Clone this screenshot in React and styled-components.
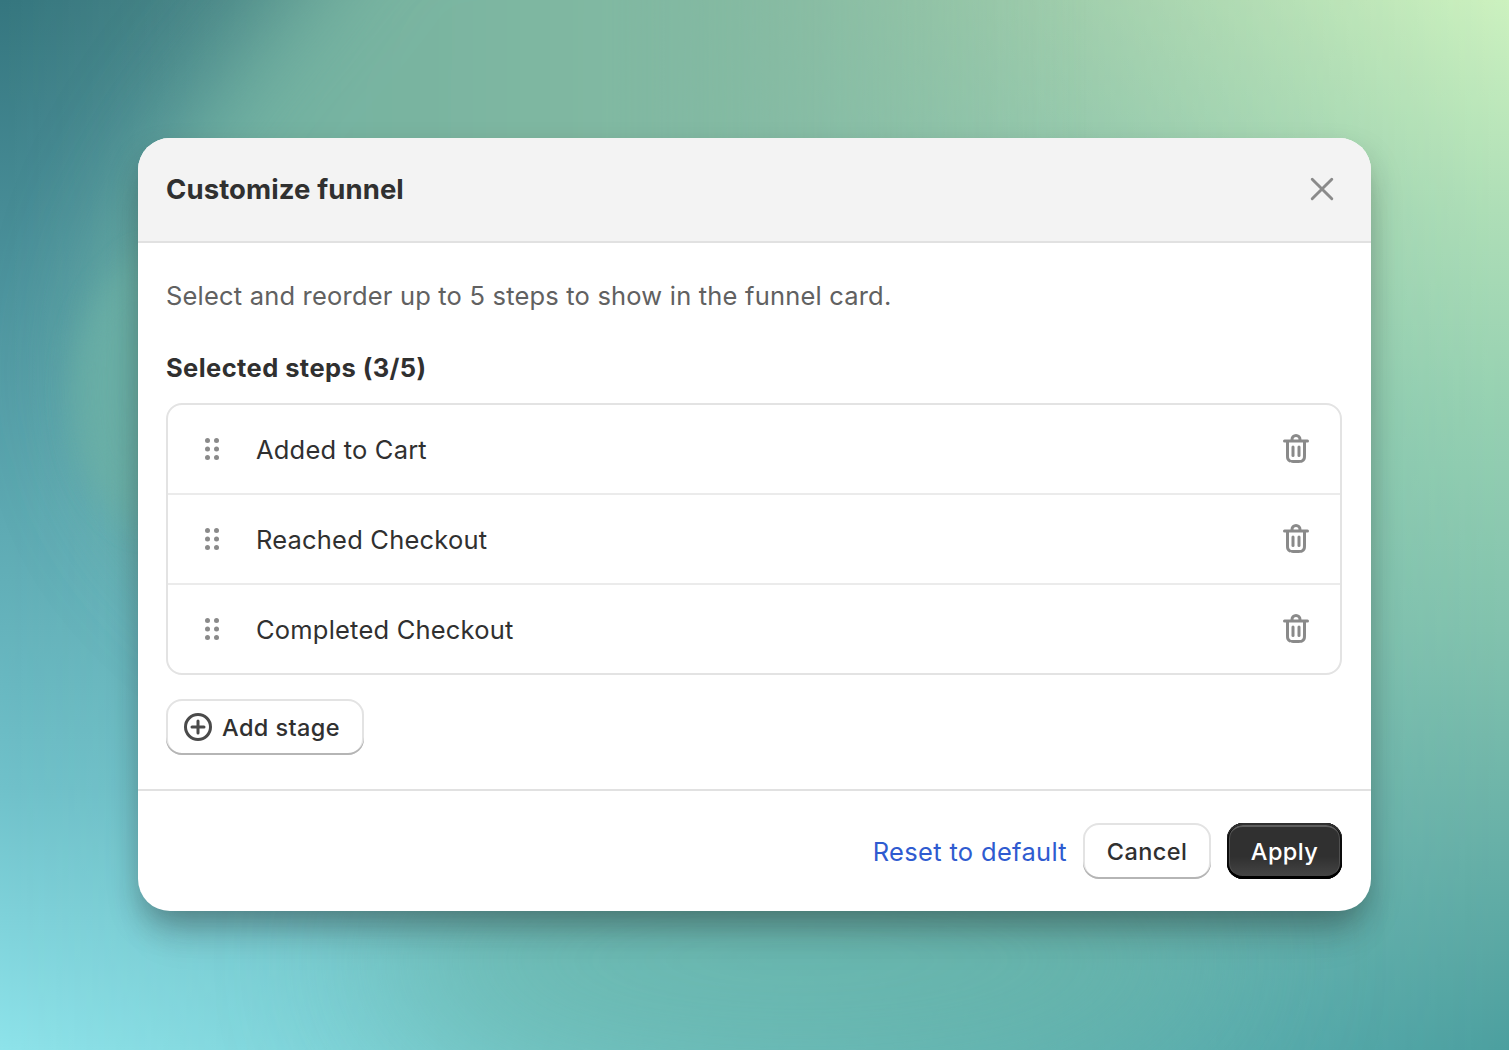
import React from "react";
import styled, { createGlobalStyle } from "styled-components";

const GlobalStyle = createGlobalStyle`
  * {
    box-sizing: border-box;
  }

  body {
    margin: 0;
    font-family: Inter, "Liberation Sans", sans-serif;
    font-optical-sizing: none;
    color: #303030;
  }
`;

const steps = ["Added to Cart", "Reached Checkout", "Completed Checkout"];

function CloseIcon() {
  return (
    <Icon viewBox="0 0 20 20">
      <path
        d="M5.1 5.1l9.8 9.8M14.9 5.1l-9.8 9.8"
        fill="none"
        stroke="currentColor"
        strokeWidth="1.45"
        strokeLinecap="round"
      />
    </Icon>
  );
}

function DragIcon() {
  return (
    <Icon viewBox="0 0 20 20">
      {[5.75, 10, 14.25].map((y) => (
        <React.Fragment key={y}>
          <circle cx="7.75" cy={y} r="1.25" />
          <circle cx="12.25" cy={y} r="1.25" />
        </React.Fragment>
      ))}
    </Icon>
  );
}

function TrashIcon() {
  return (
    <Icon viewBox="0 0 20 20">
      <path d="M11.5 8.25a.75.75 0 0 1 .75.75v4.25a.75.75 0 0 1-1.5 0v-4.25a.75.75 0 0 1 .75-.75Z" />
      <path d="M9.25 9a.75.75 0 0 0-1.5 0v4.25a.75.75 0 0 0 1.5 0v-4.25Z" />
      <path
        fillRule="evenodd"
        d="M7.25 5.25a2.75 2.75 0 0 1 5.5 0h3a.75.75 0 0 1 0 1.5h-.75v5.45c0 1.68 0 2.52-.327 3.162a3 3 0 0 1-1.311 1.311c-.642.327-1.482.327-3.162.327h-.4c-1.68 0-2.52 0-3.162-.327a3 3 0 0 1-1.311-1.311c-.327-.642-.327-1.482-.327-3.162v-5.45h-.75a.75.75 0 0 1 0-1.5h3Zm1.5 0a1.25 1.25 0 1 1 2.5 0h-2.5Zm-2.25 1.5h7v5.45c0 .865-.001 1.423-.036 1.848-.033.408-.09.559-.128.633a1.5 1.5 0 0 1-.655.655c-.074.038-.225.095-.633.128-.425.035-.983.036-1.848.036h-.4c-.865 0-1.423-.001-1.848-.036-.408-.033-.559-.09-.633-.128a1.5 1.5 0 0 1-.656-.655c-.037-.074-.094-.225-.127-.633-.035-.425-.036-.983-.036-1.848v-5.45Z"
      />
    </Icon>
  );
}

function PlusCircleIcon() {
  return (
    <Icon viewBox="0 0 20 20">
      <g fill="none" stroke="currentColor" strokeWidth="1.5" strokeLinecap="round">
        <circle cx="10" cy="10" r="6.25" />
        <path d="M10 7v6M7 10h6" />
      </g>
    </Icon>
  );
}

function Wallpaper() {
  return (
    <Backdrop viewBox="0 0 1509 1050" aria-hidden="true">
      <defs>
        <linearGradient id="left" x1="0" y1="0" x2="0" y2="1">
          <stop offset="0" stopColor="#35767f" />
          <stop offset="0.24" stopColor="#4a909a" />
          <stop offset="0.5" stopColor="#5eaab3" />
          <stop offset="0.75" stopColor="#70c1ca" />
          <stop offset="1" stopColor="#8ee3ea" />
        </linearGradient>
        <linearGradient id="right" x1="0" y1="0" x2="0" y2="1">
          <stop offset="0" stopColor="#cdf2bf" />
          <stop offset="0.2" stopColor="#afdfb7" />
          <stop offset="0.4" stopColor="#95d0b1" />
          <stop offset="0.6" stopColor="#82c2ad" />
          <stop offset="0.8" stopColor="#68b0a7" />
          <stop offset="1" stopColor="#4c9f9f" />
        </linearGradient>
        <linearGradient id="across">
          <stop offset="0" stopColor="#fff" stopOpacity="0" />
          <stop offset="1" stopColor="#fff" />
        </linearGradient>
        <mask id="fade">
          <rect width="1509" height="1050" fill="url(#across)" />
        </mask>
        <linearGradient id="green" x1="0" y1="0" x2="1" y2="0">
          <stop offset="0" stopColor="#6bb0a4" />
          <stop offset="0.3" stopColor="#79b4a0" />
          <stop offset="0.55" stopColor="#82b9a2" />
          <stop offset="1" stopColor="#9ccdab" />
        </linearGradient>
        <filter id="blur50" x="-30%" y="-30%" width="160%" height="160%">
          <feGaussianBlur stdDeviation="50" />
        </filter>
        <filter id="blur14" x="-60%" y="-30%" width="220%" height="160%">
          <feGaussianBlur stdDeviation="14" />
        </filter>
        <filter id="blur80" x="-40%" y="-100%" width="180%" height="300%">
          <feGaussianBlur stdDeviation="80" />
        </filter>
        <linearGradient id="blobFade">
          <stop offset="0.4" stopColor="#fff" />
          <stop offset="0.72" stopColor="#fff" stopOpacity="0" />
        </linearGradient>
        <mask id="blobMask">
          <rect width="1509" height="1050" fill="url(#blobFade)" />
        </mask>
      </defs>
      <rect width="1509" height="1050" fill="url(#left)" />
      <rect width="1509" height="1050" fill="url(#right)" mask="url(#fade)" />
      <ellipse
        cx="800"
        cy="960"
        rx="430"
        ry="150"
        fill="#68b2a4"
        filter="url(#blur80)"
        opacity="0.6"
      />
      <g mask="url(#blobMask)">
        <path
          d="M380-120C280 40 98 170 98 380 98 480 160 560 300 660L1100 700V-120Z"
          fill="url(#green)"
          filter="url(#blur50)"
        />
        <path
          d="M150 250C90 290 74 340 74 395 76 460 92 500 145 530Z"
          fill="#6cb0a6"
          filter="url(#blur14)"
          opacity="0.7"
        />
      </g>
    </Backdrop>
  );
}

function App() {
  return (
    <Page>
      <GlobalStyle />
      <Wallpaper />
      <Modal>
        <Header>
          <Title>Customize funnel</Title>
          <IconButton aria-label="Close">
            <CloseIcon />
          </IconButton>
        </Header>
        <Body>
          <Description>
            Select and reorder up to 5 steps to show in the funnel card.
          </Description>
          <Subtitle>Selected steps (3/5)</Subtitle>
          <List>
            {steps.map((step) => (
              <Row key={step}>
                <Handle>
                  <DragIcon />
                </Handle>
                <RowText>{step}</RowText>
                <IconButton aria-label="Remove">
                  <TrashIcon />
                </IconButton>
              </Row>
            ))}
          </List>
          <AddButton>
            <PlusCircleIcon />
            <span>Add stage</span>
          </AddButton>
        </Body>
        <Footer>
          <ResetButton>Reset to default</ResetButton>
          <Button $width={128}>
            <span>Cancel</span>
          </Button>
          <ApplyButton $width={115}>
            <span>Apply</span>
          </ApplyButton>
        </Footer>
      </Modal>
    </Page>
  );
}

const Page = styled.div`
  width: 1509px;
  height: 1050px;
  display: grid;
  overflow: hidden;

  > * {
    grid-area: 1 / 1;
  }
`;

const Backdrop = styled.svg`
  width: 1509px;
  height: 1050px;
  display: block;
`;

const Modal = styled.div`
  width: 1233px;
  height: 773px;
  margin: 138px;
  z-index: 1;
  display: flex;
  flex-direction: column;
  overflow: hidden;
  background: #fff;
  border-radius: 32px;
  box-shadow: 0 16px 32px -4px rgba(26, 26, 26, 0.36),
    0 40px 40px -16px rgba(26, 26, 26, 0.1);
`;

const Header = styled.div`
  height: 105px;
  flex-shrink: 0;
  padding: 0 29px 2px 28px;
  display: flex;
  justify-content: space-between;
  align-items: center;
  background: #f3f3f3;
  border-bottom: 2px solid #e1e1e1;
`;

const Title = styled.h2`
  margin: 0;
  padding-top: 1px;
  font-size: 27.5px;
  line-height: 40px;
  font-weight: 650;
  letter-spacing: 0.1px;
`;

const Icon = styled.svg`
  width: 40px;
  height: 40px;
  flex-shrink: 0;
  display: block;
  fill: currentColor;
`;

const IconButton = styled.button`
  padding: 0;
  border: none;
  background: none;
  color: #8a8a8a;
  cursor: pointer;
`;

const Body = styled.div`
  flex: 1;
  padding: 33px 29px 0 28px;
`;

const Description = styled.p`
  margin: 0 0 32px;
  font-size: 25.5px;
  line-height: 40px;
  letter-spacing: 0.19px;
  color: #616161;
`;

const Subtitle = styled.h3`
  margin: 0 0 15px;
  font-size: 25.5px;
  line-height: 40px;
  font-weight: 650;
  letter-spacing: 0.42px;
`;

const List = styled.div`
  border: 2px solid #e3e3e3;
  border-radius: 16px;
`;

const Row = styled.div`
  height: 90px;
  padding: 0 24px;
  display: flex;
  align-items: center;
  border-bottom: 2px solid #ebebeb;

  &:last-child {
    height: 88px;
    border-bottom: none;
  }
`;

const Handle = styled.span`
  color: #8a8a8a;
  cursor: grab;
`;

const RowText = styled.span`
  flex: 1;
  margin-left: 24px;
  padding-top: 2px;
  font-size: 25.5px;
  line-height: 40px;
  letter-spacing: 0.2px;
`;

const Button = styled.button`
  width: ${(props) => props.$width}px;
  height: 56px;
  padding: 0;
  display: flex;
  justify-content: center;
  align-items: center;
  border: none;
  border-radius: 16px;
  background: #fff;
  color: #303030;
  font-family: inherit;
  font-size: 23.5px;
  line-height: 40px;
  font-weight: 550;
  letter-spacing: 0.4px;
  cursor: pointer;
  box-shadow: inset 0 -2px 0 #b5b5b5, inset 0 0 0 2px #e3e3e3;

  span {
    padding-top: 1px;
  }
`;

const AddButton = styled(Button).attrs({ $width: 198 })`
  margin-top: 24px;
  padding-left: 12px;
  justify-content: flex-start;
  gap: 4px;

  svg {
    color: #4a4a4a;
  }
`;

const ApplyButton = styled(Button)`
  background: linear-gradient(180deg, #303030 60%, #474747 100%);
  color: #fff;
  box-shadow: inset 0 2px 0 #303030, inset 0 -3px 0 #000, inset 0 0 0 2px #0c0c0c,
    inset 0 4px 0 #5e5e5e, inset 0 0 0 3px #505050;
`;

const Footer = styled.div`
  height: 122px;
  flex-shrink: 0;
  padding: 0 29px 0 28px;
  display: flex;
  justify-content: flex-end;
  align-items: center;
  gap: 16px;
  border-top: 2px solid #e1e1e1;
`;

const ResetButton = styled.button`
  padding: 2px 0 0;
  border: none;
  background: none;
  font-family: inherit;
  font-size: 25.5px;
  line-height: 40px;
  letter-spacing: 0.32px;
  color: #2f5bd0;
  cursor: pointer;
`;

export default App;
